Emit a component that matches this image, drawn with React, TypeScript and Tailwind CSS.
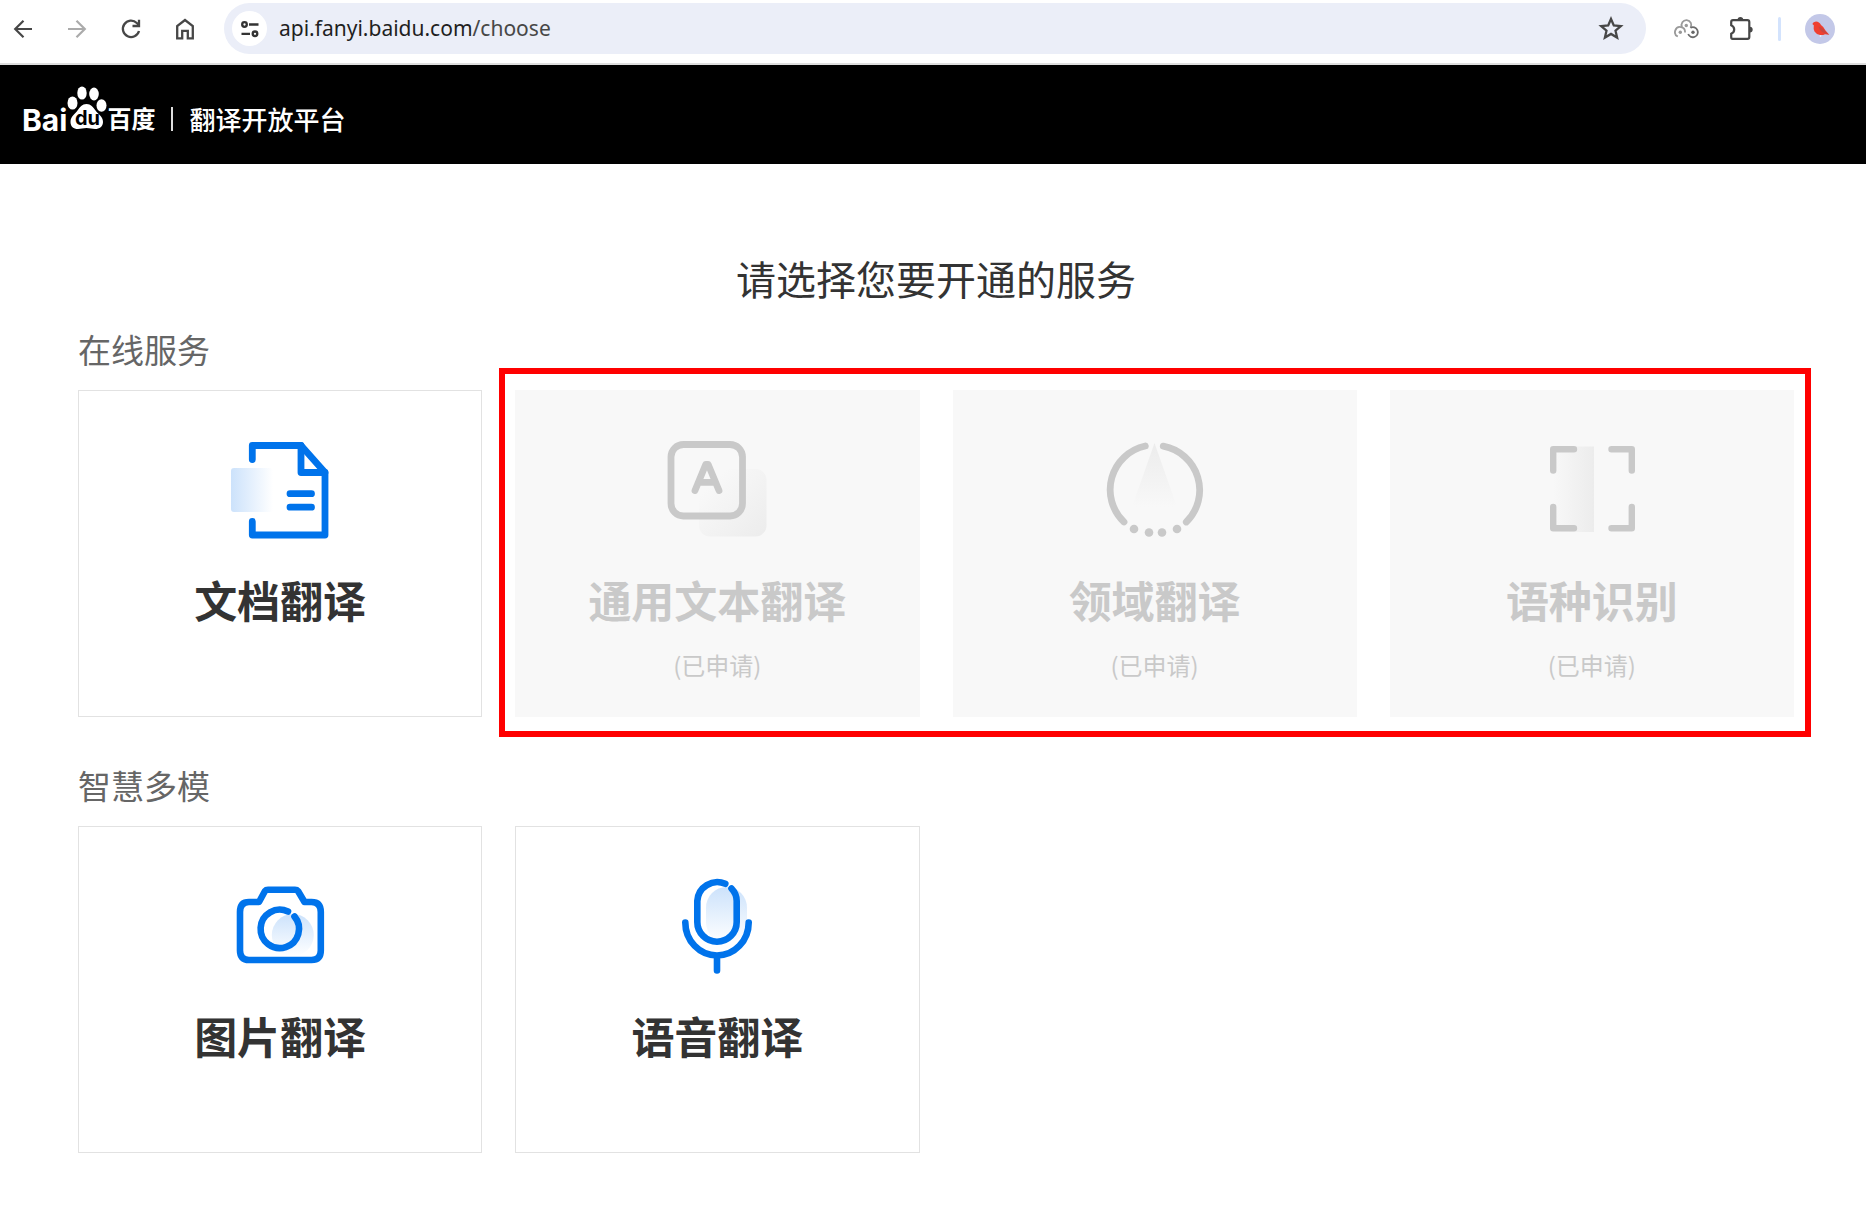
import { useId, type ReactNode } from "react";

const BackIcon = () => (
  <svg width="24" height="24" viewBox="0 0 24 24" fill="none" stroke="#474747" strokeWidth="2.2">
    <path d="M21 12H4.500M12.500 3.700L4.200 12l8.300 8.300" />
  </svg>
);

const ForwardIcon = () => (
  <svg width="24" height="24" viewBox="0 0 24 24" fill="none" stroke="#ababab" strokeWidth="2.2">
    <path d="M3 12H19.500M11.500 3.700L19.800 12l-8.300 8.300" />
  </svg>
);

const ReloadIcon = () => (
  <svg width="24" height="24" viewBox="0 0 24 24" fill="none" stroke="#474747" strokeWidth="2.3">
    <path d="M20 14A8.200 8.200 0 1 1 17.800 6L20 8.300" />
    <path d="M20 2.800V9H13.500" />
  </svg>
);

const HomeIcon = () => (
  <svg width="24" height="24" viewBox="0 0 24 24" fill="none" stroke="#474747" strokeWidth="2.3">
    <path d="M4.200 21.300V9L12 3l7.800 6v12.300h-5v-7.500H9.200v7.500z" />
  </svg>
);

const SiteInfoIcon = () => (
  <svg width="22" height="22" viewBox="0 0 22 22" fill="none" stroke="#333" strokeWidth="2.3">
    <circle cx="5.500" cy="6.500" r="2.300" />
    <path d="M10 6.500H19.500M2.500 15.800H11" />
    <circle cx="16" cy="15.800" r="2.300" />
  </svg>
);

const StarIcon = () => (
  <svg width="26" height="26" viewBox="0 0 26 26" fill="none" stroke="#474747" strokeWidth="2.3">
    <path d="M13 3l2.800 6.500 7 .6-5.300 4.600 1.600 6.900-6.100-3.700-6.100 3.700 1.600-6.900-5.300-4.600 7-.6z" />
  </svg>
);

const CirclesIcon = () => (
  <svg width="26" height="22" viewBox="0 0 26 22" fill="none" strokeWidth="1.8">
    <path d="M8 9.200A4.900 4.900 0 1 1 16.500 9.800" stroke="#9a9a9a" />
    <path d="M3.800 18.500A5 5 0 1 1 11 14.500" stroke="#9a9a9a" />
    <path d="M16.500 9.800A5 5 0 1 1 14.200 16" stroke="#6b6b6b" />
    <circle cx="12.300" cy="7.500" r="1.700" fill="#999" />
    <circle cx="6.300" cy="14.200" r="1.700" fill="#999" />
    <circle cx="19" cy="14.200" r="1.700" fill="#666" />
  </svg>
);

const PuzzleIcon = () => (
  <svg width="26" height="26" viewBox="0 0 26 26">
    <path
      d="M5 4.200H19.500Q21.300 4.200 21.300 6V21Q21.300 22.800 19.500 22.800H4.500Q3.200 22.800 3.200 21V17.800C7.200 16 7.200 11 3.200 9.200V6Q3.200 4.200 5 4.200Z"
      fill="none"
      stroke="#474747"
      strokeWidth="2.2"
    />
    <path d="M9.600 3.800a2.800 2.800 0 0 1 5.600 0zM21.800 10.700a2.900 2.900 0 0 1 0 5.800z" fill="#474747" />
  </svg>
);

const Avatar = () => (
  <svg width="30" height="30" viewBox="0 0 30 30">
    <circle cx="15" cy="15" r="15" fill="#c3c8e8" />
    <path d="M7.300 10Q8.200 7.500 11 7.500Q14.300 7.700 16 11Q19 13 20.500 16.500L24.300 20.700L20 20.200Q18 21.300 15 21Q11.500 20.500 9.500 17.500Q8.200 15 8.800 11.200Z" fill="#ef3f30" />
    <path d="M13.500 12.500Q18 13.500 20 17L23.500 20.500L19 18.800Q15 17.500 13.500 12.500Z" fill="#c9453f" />
    <path d="M15.500 21v2" stroke="#e6e8f5" strokeWidth="1.500" />
  </svg>
);

const PawIcon = () => (
  <svg width="40" height="44" viewBox="0 0 40 44" fill="#fff" aria-hidden="true">
    <ellipse cx="5.500" cy="17" rx="5" ry="6.600" />
    <ellipse cx="15" cy="7" rx="4.700" ry="6.600" />
    <ellipse cx="27" cy="8" rx="4.800" ry="6.500" />
    <ellipse cx="34.500" cy="19.500" rx="5" ry="6.200" />
    <path d="M19.500 18c4.500 0 6.500 3 9 6.500 3 4 7.500 6 7.500 11.500 0 4.500-3.500 7-8 7-3 0-5-1-8.500-1s-5.500 1-8.500 1c-4.500 0-7.500-2.500-7.500-7 0-5.500 4-7.500 7-11.500 2.500-3.500 4.500-6.500 9-6.500z" />
  </svg>
);

type IconProps = { size?: number };

const DocIcon = ({ size = 110 }: IconProps) => {
  const id = useId();
  return (
    <svg width={size} height={size} viewBox="0 0 110 110" fill="none" stroke="#0073eb" strokeWidth="6.8" strokeLinecap="round" strokeLinejoin="round">
      <defs>
        <linearGradient id={id}>
          <stop offset="0" stopColor="#cce2fb" />
          <stop offset="1" stopColor="#fff" />
        </linearGradient>
      </defs>
      <rect x="6" y="33" width="42" height="44" rx="3" fill={`url(#${id})`} stroke="none" />
      <path d="M27.300 24.500V10.500H76L100 37.500V100H27.300V86.500" />
      <path d="M76 10.500V37.500H100M65 58.700H86.500M65 72.200H86.500" />
    </svg>
  );
};

const TextIcon = ({ size = 110 }: IconProps) => {
  const id = useId();
  return (
    <svg width={size} height={size} viewBox="0 0 110 110" fill="none" stroke="#c9c9c9" strokeWidth="6.8" strokeLinecap="round" strokeLinejoin="round">
      <defs>
        <linearGradient id={id} x1="0" y1="0" x2="1" y2="1">
          <stop offset="0.200" stopColor="#f8f8f8" />
          <stop offset="1" stopColor="#ececec" />
        </linearGradient>
      </defs>
      <rect x="37" y="34" width="67.500" height="67.500" rx="11" fill={`url(#${id})`} stroke="none" />
      <rect x="9" y="9.500" width="71.500" height="71.500" rx="12.500" />
      <path d="M33 55.500L43.700 29.500H46.200L57 55.500M39 47.300H52" />
    </svg>
  );
};

const FieldIcon = ({ size = 110 }: IconProps) => {
  const id = useId();
  return (
    <svg width={size} height={size} viewBox="0 2 110 110" fill="none" stroke="#c9c9c9" strokeWidth="6.8" strokeLinecap="round">
      <defs>
        <linearGradient id={id} x1="0" y1="0" x2="0" y2="1">
          <stop offset="0" stopColor="#ececec" />
          <stop offset="1" stopColor="#f8f8f8" />
        </linearGradient>
      </defs>
      <path d="M54.500 10L77 74H32z" fill={`url(#${id})`} stroke="none" />
      <path d="M45.300 13A44.700 44.700 0 0 0 24 89M63.300 13.200A44.700 44.700 0 0 1 86.300 89" />
      <g fill="#c9c9c9" stroke="none">
        <circle cx="34" cy="96" r="4.300" />
        <circle cx="49" cy="99.500" r="4.300" />
        <circle cx="62" cy="99.500" r="4.300" />
        <circle cx="77" cy="96" r="4.300" />
      </g>
    </svg>
  );
};

const ScanIcon = ({ size = 110 }: IconProps) => {
  const id = useId();
  return (
    <svg width={size} height={size} viewBox="0 2 110 110" fill="none" stroke="#c9c9c9" strokeWidth="6.4" strokeLinecap="round" strokeLinejoin="round">
      <defs>
        <linearGradient id={id}>
          <stop offset="0" stopColor="#f8f8f8" />
          <stop offset="1" stopColor="#ececec" />
        </linearGradient>
      </defs>
      <rect x="16" y="13.500" width="41" height="85.500" fill={`url(#${id})`} stroke="none" />
      <path d="M37 16.200H16.200V37.500M74.500 16.200H94.800V37.500M16.200 74V95.300H37M94.800 74V95.300H74.500" />
    </svg>
  );
};

const CameraIcon = ({ size = 110 }: IconProps) => {
  const id = useId();
  return (
    <svg width={size} height={size} viewBox="0 0 110 110" fill="none" stroke="#0073eb" strokeWidth="6.6" strokeLinecap="round" strokeLinejoin="round">
      <defs>
        <linearGradient id={id} x1="0" y1="0" x2="0" y2="1">
          <stop offset="0" stopColor="#cce2fb" />
          <stop offset="1" stopColor="#fff" />
        </linearGradient>
      </defs>
      <circle cx="67.800" cy="64" r="21" fill={`url(#${id})`} stroke="none" />
      <path d="M24 31H34L40 20Q41 18.800 43 18.800H70Q72 18.800 73 20L79.500 31H86.500Q95.800 31 95.800 41V79.500Q95.800 89 86.500 89H24Q15 89 15 79.500V41Q15 31 24 31Z" />
      <path d="M63 40.500A19.200 19.200 0 1 0 69.500 45.500" />
    </svg>
  );
};

const MicIcon = ({ size = 110 }: IconProps) => {
  const id = useId();
  return (
    <svg width={size} height={size} viewBox="0 4 110 110" fill="none" stroke="#0073eb" strokeWidth="6.6" strokeLinecap="round" strokeLinejoin="round">
      <defs>
        <linearGradient id={id} x1="0" y1="0" x2="0" y2="1">
          <stop offset="0" stopColor="#cce2fb" />
          <stop offset="1" stopColor="#fff" />
        </linearGradient>
      </defs>
      <rect x="44" y="20" width="41" height="56" rx="20.500" fill={`url(#${id})`} stroke="none" />
      <path d="M63.300 16.800A20 20 0 0 0 35.300 34V55A19.700 19.700 0 0 0 74.700 55V34Q74.700 27 69.500 21.500" />
      <path d="M23.300 55.500A31.700 33 0 0 0 86.700 55.500M55 89V103.500" />
    </svg>
  );
};

type Service = {
  name: string;
  icon: ReactNode;
  applied?: boolean;
};

const docService: Service = { name: "文档翻译", icon: <DocIcon /> };

const appliedServices: Service[] = [
  { name: "通用文本翻译", icon: <TextIcon />, applied: true },
  { name: "领域翻译", icon: <FieldIcon />, applied: true },
  { name: "语种识别", icon: <ScanIcon />, applied: true },
];

const multimodalServices: Service[] = [
  { name: "图片翻译", icon: <CameraIcon /> },
  { name: "语音翻译", icon: <MicIcon /> },
];

const ServiceCard = ({ name, icon, applied }: Service) => (
  <button
    type="button"
    disabled={applied}
    className={
      applied
        ? "flex min-h-[327px] w-full flex-col items-center border border-[#f8f8f8] bg-[#f8f8f8] pt-11 text-[#c9c9c9]"
        : "flex min-h-[327px] w-full flex-col items-center border border-[#e2e2e2] bg-white pt-11 text-[#333]"
    }
  >
    {icon}
    <span className="mt-6 text-[43px] leading-[60px] font-bold">{name}</span>
    {applied && <span className="mt-5 text-2xl leading-8">(已申请)</span>}
  </button>
);

const BrowserBar = () => (
  <div className="flex items-start border-b-2 border-[#dedede] bg-white pt-[3px] pb-[9px] pl-[11px]">
    <div className="flex h-[51px] items-center gap-[30px]">
      <button type="button" aria-label="Back"><BackIcon /></button>
      <button type="button" aria-label="Forward"><ForwardIcon /></button>
      <button type="button" aria-label="Reload"><ReloadIcon /></button>
      <button type="button" aria-label="Home"><HomeIcon /></button>
    </div>
    <div className="ml-[27px] flex h-[51px] flex-1 items-center rounded-full bg-[#ebeef8] pr-[22px] pl-2">
      <button type="button" aria-label="Site information" className="flex size-[35px] items-center justify-center rounded-full bg-white">
        <SiteInfoIcon />
      </button>
      <a href="#" className="ml-3 flex-1 pb-0.5 font-['Noto_Sans',sans-serif] text-[21px] leading-8 text-[#1f1f1f]">
        api.fanyi.baidu.com<span className="text-[#474747]">/choose</span>
      </a>
      <button type="button" aria-label="Bookmark"><StarIcon /></button>
    </div>
    <div className="flex h-[51px] items-center pr-[31px] pl-7">
      <button type="button" aria-label="Extension"><CirclesIcon /></button>
      <button type="button" aria-label="Extensions" className="ml-7"><PuzzleIcon /></button>
      <span className="ml-6 h-6 w-[3px] rounded-full bg-[#d3e3fd]" />
      <button type="button" aria-label="Profile" className="ml-6"><Avatar /></button>
    </div>
  </div>
);

const SiteHeader = () => (
  <header className="flex h-[99px] items-center bg-black pt-2 pl-[22px] text-white">
    <a href="#" className="flex items-end pb-4">
      <span className="font-['Inter',sans-serif] text-[30px] leading-8 font-bold">Bai</span>
      <span className="relative mb-1.5 flex">
        <PawIcon />
        <span className="absolute inset-x-0 bottom-0 text-center font-['Inter',sans-serif] text-xl leading-6 font-bold text-black">du</span>
      </span>
      <span className="text-2xl leading-9 font-bold">百度</span>
    </a>
    <span className="ml-4 h-6 w-0.5 bg-[#ddd]" />
    <span className="ml-4 text-[26px] leading-9 font-medium">翻译开放平台</span>
  </header>
);

const App = () => {
  return (
    <div className="min-h-screen bg-white font-['Noto_Sans_CJK_SC','Noto_Sans',sans-serif]" lang="zh-CN">
      <BrowserBar />
      <SiteHeader />
      <main className="pt-21 pr-[72px] pb-14 pl-[78px]">
        <h1 className="text-center text-[40px] leading-[60px] text-[#333]">请选择您要开通的服务</h1>

        <section className="mt-4">
          <h2 className="text-[33px] leading-[50px] text-[#666]">在线服务</h2>
          <div className="mt-4 grid grid-cols-4 gap-x-[33px]">
            <ServiceCard {...docService} />
            <div className="relative col-span-3 grid grid-cols-3 gap-x-[33px]">
              {appliedServices.map((service) => (
                <ServiceCard key={service.name} {...service} />
              ))}
              {/* highlight frame around the services already applied for */}
              <div className="pointer-events-none absolute -top-[22px] -right-[17px] -bottom-5 -left-4 border-6 border-[#ff0000]" />
            </div>
          </div>
        </section>

        <section className="mt-[43px]">
          <h2 className="text-[33px] leading-[50px] text-[#666]">智慧多模</h2>
          <div className="mt-4 grid grid-cols-4 gap-x-[33px]">
            {multimodalServices.map((service) => (
              <ServiceCard key={service.name} {...service} />
            ))}
          </div>
        </section>
      </main>
    </div>
  );
};

export default App;
